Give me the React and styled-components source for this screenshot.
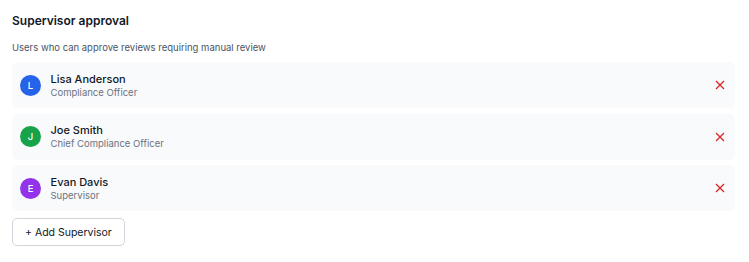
import React from 'react';
import styled, { createGlobalStyle } from 'styled-components';

const GlobalStyle = createGlobalStyle`
  body {
    margin: 0;
    background: #ffffff;
    font-family: Inter, 'Noto Sans', sans-serif;
    color: #111827;
  }
`;

const Section = styled.section`
  padding: 12px 14px 12px 12px;
`;

const Title = styled.h2`
  margin: 0;
  font-size: 12px;
  line-height: 18px;
  font-weight: 600;
  color: #111827;
`;

const Subtitle = styled.p`
  margin: 11px 0 7px;
  font-size: 9.5px;
  line-height: 14px;
  color: #4b5563;
`;

const List = styled.div`
  display: flex;
  flex-direction: column;
  gap: 5.5px;
`;

const Row = styled.div`
  display: flex;
  align-items: center;
  height: 46px;
  padding: 0 8px 0 8px;
  background: #f9fafb;
  border-radius: 6px;
`;

const Avatar = styled.div`
  width: 21px;
  height: 21px;
  border-radius: 50%;
  background: ${(p) => p.color};
  color: #fff;
  font-size: 9.5px;
  font-weight: 500;
  display: flex;
  align-items: center;
  justify-content: center;
  flex-shrink: 0;
`;

const Info = styled.div`
  margin-left: 9.5px;
  flex: 1;
  display: flex;
  flex-direction: column;
`;

const Name = styled.div`
  font-size: 11px;
  line-height: 14px;
  font-weight: 500;
  color: #111827;
`;

const Role = styled.div`
  font-size: 9.5px;
  line-height: 13px;
  color: #6b7280;
`;

const RemoveButton = styled.button`
  border: none;
  background: none;
  padding: 2px;
  cursor: pointer;
  display: flex;
  color: #dc2626;
`;

const AddButton = styled.button`
  margin-top: 7px;
  height: 28px;
  padding: 0 12px;
  border: 1px solid #d1d5db;
  border-radius: 5px;
  background: #fff;
  font-family: inherit;
  font-size: 10.5px;
  color: #111827;
  cursor: pointer;
`;

const supervisors = [
  { initial: 'L', name: 'Lisa Anderson', role: 'Compliance Officer', color: '#2563eb' },
  { initial: 'J', name: 'Joe Smith', role: 'Chief Compliance Officer', color: '#16a34a' },
  { initial: 'E', name: 'Evan Davis', role: 'Supervisor', color: '#9333ea' },
];

const CloseIcon = () => (
  <svg width="10" height="10" viewBox="0 0 10 10" fill="none">
    <path d="M1 1L9 9M9 1L1 9" stroke="currentColor" strokeWidth="1.3" />
  </svg>
);

const App = () => (
  <>
    <GlobalStyle />
    <Section>
      <Title>Supervisor approval</Title>
      <Subtitle>Users who can approve reviews requiring manual review</Subtitle>
      <List>
        {supervisors.map((s) => (
          <Row key={s.name}>
            <Avatar color={s.color}>{s.initial}</Avatar>
            <Info>
              <Name>{s.name}</Name>
              <Role>{s.role}</Role>
            </Info>
            <RemoveButton aria-label={`Remove ${s.name}`}>
              <CloseIcon />
            </RemoveButton>
          </Row>
        ))}
      </List>
      <AddButton>+ Add Supervisor</AddButton>
    </Section>
  </>
);

export default App;
